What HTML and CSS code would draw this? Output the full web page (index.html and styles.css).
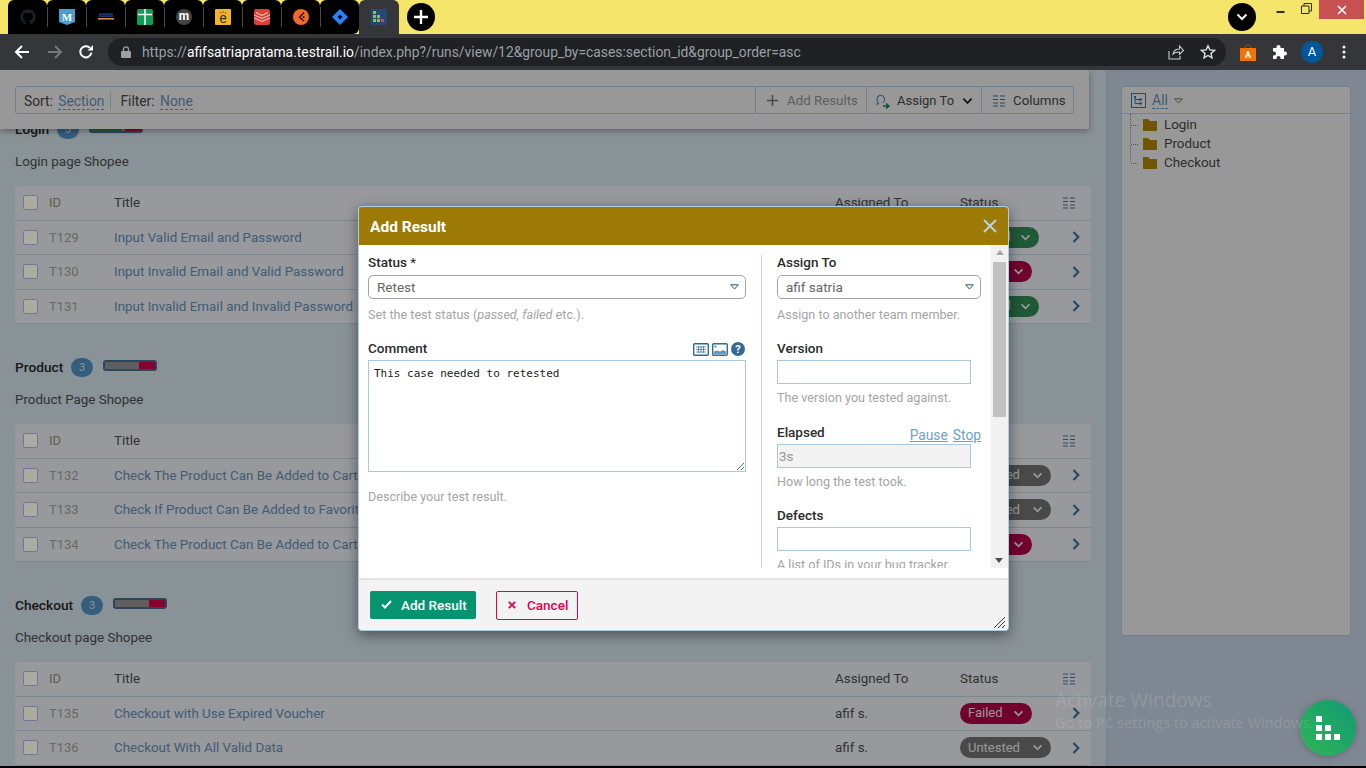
FILE: index.html
```html
<!DOCTYPE html>
<html lang="en">
<head>
<meta charset="utf-8">
<title>Test Run - TestRail</title>
<link rel="stylesheet" href="styles.css">
</head>
<body>
<svg class="defs" width="0" height="0" aria-hidden="true">
  <symbol id="chev-d" viewBox="0 0 12 8"><path d="M1.5 1.5 6 6l4.500-4.500" fill="none" stroke="currentColor" stroke-width="2"/></symbol>
  <symbol id="chev-r" viewBox="0 0 8 12"><path d="M1.5 1 6.300 6l-4.800 5" fill="none" stroke="currentColor" stroke-width="2.200"/></symbol>
  <symbol id="cols" viewBox="0 0 12 12"><path d="M0 1h5M7 1h5M0 4.500h5M7 4.500h5M0 8h5M7 8h5M0 11h5M7 11h5" stroke="currentColor" stroke-width="1.100"/></symbol>
  <symbol id="folder" viewBox="0 0 14 12"><path d="M0 0h5l2 2h7v10H0z" fill="#a67f00"/></symbol>
  <symbol id="caret" viewBox="0 0 11 7"><path d="M.8.8h9.400L5.500 6z" fill="none" stroke="currentColor" stroke-width="1.200"/></symbol>
</svg>

<header class="tabstrip">
  <div class="tabs">
    <div class="tab"><svg class="fav" viewBox="0 0 24 24"><path fill="#1b2227" d="M12 .5C5.650.5.500 5.650.500 12c0 5.080 3.290 9.390 7.860 10.910.570.100.780-.250.780-.550v-2.140c-3.200.700-3.870-1.360-3.870-1.360-.520-1.330-1.280-1.680-1.280-1.680-1.040-.710.080-.700.080-.700 1.150.080 1.760 1.180 1.760 1.180 1.030 1.760 2.690 1.250 3.340.960.100-.740.400-1.250.730-1.540-2.550-.290-5.240-1.280-5.240-5.690 0-1.260.450-2.290 1.180-3.090-.120-.290-.510-1.460.110-3.050 0 0 .960-.310 3.150 1.180a10.900 10.900 0 0 1 5.740 0c2.190-1.490 3.150-1.180 3.150-1.180.620 1.590.230 2.760.110 3.050.730.800 1.180 1.830 1.180 3.090 0 4.420-2.690 5.390-5.250 5.680.410.360.780 1.060.780 2.130v3.160c0 .310.210.660.790.550A11.500 11.500 0 0 0 23.500 12C23.500 5.650 18.350.5 12 .5z"/></svg></div>
    <div class="tab"><svg class="fav" viewBox="0 0 16 16"><path fill="#4a9fd0" d="M0 0h16v13l-8 3-8-3z"/><text x="8" y="11.500" class="fav-m">M</text></svg></div>
    <div class="tab"><svg class="fav" viewBox="0 0 16 16"><path fill="#27438f" d="M1 4.500h14v1.200H1zM1 6.500h14v1.200H1z"/><path fill="#d68a3c" d="M0 9h16v1.600H0z"/></svg></div>
    <div class="tab"><svg class="fav" viewBox="0 0 16 16"><rect width="16" height="16" rx="1.500" fill="#0f9d58"/><path d="M1 5.500h14M8 0v16" stroke="#fff" stroke-width="1.500"/></svg></div>
    <div class="tab"><svg class="fav" viewBox="0 0 16 16"><circle cx="8" cy="8" r="8" fill="#444"/><text x="8" y="11" class="fav-mm">m</text></svg></div>
    <div class="tab"><svg class="fav" viewBox="0 0 16 16"><rect width="16" height="16" rx="1" fill="#f2b71f"/><text x="8" y="14" class="fav-e">e</text><path d="M5 3l.800 1.400M8 2.200v1.600M11 3l-.800 1.400" stroke="#333" stroke-width=".9"/></svg></div>
    <div class="tab"><svg class="fav" viewBox="0 0 16 16"><rect width="16" height="16" rx="2.500" fill="#db4035"/><path d="M0 6l8 3.500L16 6M0 9l8 3.500L16 9M2 3.500l6 3 6-3" fill="none" stroke="#f6c9c4" stroke-width="1.100"/></svg></div>
    <div class="tab"><svg class="fav" viewBox="0 0 16 16"><circle cx="8" cy="8" r="8" fill="#f2682a"/><path d="M11 3.500 6.500 8.300 11 12" fill="none" stroke="#2a1208" stroke-width="1.300"/><circle cx="10.600" cy="8" r="1" fill="#2a1208"/></svg></div>
    <div class="tab"><svg class="fav" viewBox="0 0 16 16"><path fill="#2684ff" d="M8 0l8 8-8 8-8-8z"/><path fill="#000" d="M8 5.500 10.500 8 8 10.500 5.500 8z"/></svg></div>
    <div class="tab tab-active"><svg class="fav" viewBox="0 0 16 16"><rect width="16" height="16" fill="#25496f"/><path fill="#8bc34a" d="M2 2h3v3H2zM2 6h3v3H2zM6 6h3v3H6zM2 10h3v3H2zM6 10h3v3H6z"/><path fill="#d9455f" d="M10 10h3v3h-3z"/></svg></div>
  </div>
  <button class="round-btn new-tab" aria-label="New tab"><svg width="16" height="16" viewBox="0 0 16 16"><path d="M8 1v14M1 8h14" stroke="#fff" stroke-width="2.400"/></svg></button>
  <div class="strip-right">
    <button class="round-btn" aria-label="Search tabs"><svg width="12" height="8" class="white"><use href="#chev-d"/></svg></button>
    <div class="winctl">
      <span class="win-btn"><svg width="10" height="4" viewBox="0 0 10 4"><path d="M1.500 2h8" stroke="#2b2b1a" stroke-width="2"/></svg></span>
      <span class="win-btn win-restore"><svg width="11" height="11" viewBox="0 0 11 11"><path d="M.5 3h7.500v7.500H.5zM3 3V.5h7.500V8H8" fill="none" stroke="#2b2b1a"/></svg></span>
      <span class="win-close"><svg width="10" height="10" viewBox="0 0 10 10"><path d="M1 1l8 8M9 1l-8 8" stroke="#fff" stroke-width="1.600"/></svg></span>
    </div>
  </div>
</header>

<nav class="navbar">
  <svg class="nav-ico" viewBox="0 0 16 16" width="16" height="16"><path d="M15 8H2M8 2 2 8l6 6" fill="none" stroke="#fff" stroke-width="2"/></svg>
  <svg class="nav-ico" viewBox="0 0 16 16" width="16" height="16"><path d="M1 8h13M8 2l6 6-6 6" fill="none" stroke="#75777a" stroke-width="2"/></svg>
  <svg class="nav-ico" viewBox="0 0 16 16" width="16" height="16"><path d="M13.400 8.600A5.600 5.600 0 1 1 11.800 3.800" fill="none" stroke="#fff" stroke-width="2"/><path d="M9.500 6.500H15V1z" fill="#fff"/></svg>
  <div class="omnibox">
    <svg width="10" height="12" viewBox="0 0 10 12"><path d="M2.500 5V3.300a2.500 2.500 0 0 1 5 0V5" fill="none" stroke="#9aa0a6" stroke-width="1.300"/><rect y="5" width="10" height="7" rx="1" fill="#9aa0a6"/></svg>
    <span class="url">https://<b>afifsatriapratama.testrail.io</b>/index.php?/runs/view/12&amp;group_by=cases:section_id&amp;group_order=asc</span>
    <svg class="omni-share" width="16" height="16" viewBox="0 0 16 16"><path d="M1 7v8h11v-3M5 10c.600-3.400 3-5 6.500-5V2l4 4.500-4 4V8C9 8 6.500 8.400 5 10z" fill="none" stroke="#c9cccf" stroke-width="1.100"/></svg>
    <svg class="omni-star" width="16" height="16" viewBox="0 0 16 16"><path d="M8 1.800l1.900 4.100 4.500.5-3.400 3 1 4.400L8 11.500l-4 2.300 1-4.400-3.400-3 4.500-.5z" fill="none" stroke="#dfe1e5" stroke-width="1.400"/></svg>
  </div>
  <div class="nav-ext">
    <svg width="16" height="17" viewBox="0 0 16 17"><path d="M0 4h16v13H0z" fill="#f27405"/><path d="M5 4c0-4 6-4 6 0" fill="none" stroke="#a5500a"/><text x="8" y="14" class="fav-a">A</text></svg>
    <svg width="16" height="16" viewBox="0 0 16 16"><path fill="#fff" d="M1 4h3.500V3a2 2 0 0 1 4 0v1H12v3.500h1a2 2 0 0 1 0 4h-1V15H8.500v-1a2 2 0 0 0-4 0v1H1v-3.500h1a2 2 0 0 0 0-4H1z"/></svg>
    <span class="avatar">A</span>
    <svg width="4" height="14" viewBox="0 0 4 14"><circle cx="2" cy="2" r="1.500" fill="#fff"/><circle cx="2" cy="7" r="1.500" fill="#fff"/><circle cx="2" cy="12" r="1.500" fill="#fff"/></svg>
  </div>
</nav>

<div class="viewport">
  <main class="main">
    <div class="stickybar">
      <div class="bar">
        <div class="bar-sort">
          <span class="bar-item">Sort: <a class="dash">Section</a></span>
          <span class="bar-item bar-filter">Filter: <a class="dash">None</a></span>
        </div>
        <div class="bar-btn bar-add"><svg width="11" height="11" viewBox="0 0 11 11"><path d="M5.500 0v11M0 5.500h11" stroke="#6d6d6d" stroke-width="1.500"/></svg>Add Results</div>
        <div class="bar-btn bar-assign"><svg width="16" height="16" viewBox="0 0 16 16"><path d="M1 11h2.500c0-1-1.500-2.500-1.500-5a3.700 3.700 0 0 1 7.400 0c0 2-.7 3-1.200 4" fill="none" stroke="#3e6d93"/><path d="M8 13h5M11 10.500l3 2.500-3 2.500" fill="none" stroke="#0e7a50" stroke-width="1.500"/></svg>Assign To<svg class="chev-dark" width="11" height="8"><use href="#chev-d"/></svg></div>
        <div class="bar-btn bar-cols"><svg class="cols" width="12" height="12"><use href="#cols"/></svg>Columns</div>
      </div>
    </div>

    <section class="section">
      <h2 class="sec-head">Login <span class="count">3</span><span class="prog"><i class="seg seg-pass seg-w1"></i><i class="seg seg-grey seg-w2"></i><i class="seg seg-fail seg-w3"></i></span></h2>
      <p class="sec-desc">Login page Shopee</p>
      <div class="table">
        <div class="row row-head"><span class="chk"></span><span class="c-id">ID</span><span>Title</span><span>Assigned To</span><span>Status</span><svg class="cols" width="12" height="12"><use href="#cols"/></svg></div>
        <div class="row"><span class="chk"></span><span class="c-id">T129</span><a class="c-link">Input Valid Email and Password</a><span>afif s.</span><span class="badge b-pass">Passed<svg width="11" height="7"><use href="#chev-d"/></svg></span><svg class="go" width="8" height="12"><use href="#chev-r"/></svg></div>
        <div class="row"><span class="chk"></span><span class="c-id">T130</span><a class="c-link">Input Invalid Email and Valid Password</a><span>afif s.</span><span class="badge b-fail">Failed<svg width="11" height="7"><use href="#chev-d"/></svg></span><svg class="go" width="8" height="12"><use href="#chev-r"/></svg></div>
        <div class="row"><span class="chk"></span><span class="c-id">T131</span><a class="c-link">Input Invalid Email and Invalid Password</a><span>afif s.</span><span class="badge b-pass">Passed<svg width="11" height="7"><use href="#chev-d"/></svg></span><svg class="go" width="8" height="12"><use href="#chev-r"/></svg></div>
      </div>
    </section>

    <section class="section">
      <h2 class="sec-head">Product <span class="count">3</span><span class="prog"><i class="seg seg-grey seg-w4"></i><i class="seg seg-fail seg-w3"></i></span></h2>
      <p class="sec-desc">Product Page Shopee</p>
      <div class="table">
        <div class="row row-head"><span class="chk"></span><span class="c-id">ID</span><span>Title</span><span>Assigned To</span><span>Status</span><svg class="cols" width="12" height="12"><use href="#cols"/></svg></div>
        <div class="row"><span class="chk"></span><span class="c-id">T132</span><a class="c-link">Check The Product Can Be Added to Cart</a><span>afif s.</span><span class="badge b-un">Untested<svg width="11" height="7"><use href="#chev-d"/></svg></span><svg class="go" width="8" height="12"><use href="#chev-r"/></svg></div>
        <div class="row"><span class="chk"></span><span class="c-id">T133</span><a class="c-link">Check If Product Can Be Added to Favorite</a><span>afif s.</span><span class="badge b-un">Untested<svg width="11" height="7"><use href="#chev-d"/></svg></span><svg class="go" width="8" height="12"><use href="#chev-r"/></svg></div>
        <div class="row"><span class="chk"></span><span class="c-id">T134</span><a class="c-link">Check The Product Can Be Added to Cart</a><span>afif s.</span><span class="badge b-fail">Failed<svg width="11" height="7"><use href="#chev-d"/></svg></span><svg class="go" width="8" height="12"><use href="#chev-r"/></svg></div>
      </div>
    </section>

    <section class="section">
      <h2 class="sec-head">Checkout <span class="count">3</span><span class="prog"><i class="seg seg-grey seg-w4"></i><i class="seg seg-fail seg-w3"></i></span></h2>
      <p class="sec-desc">Checkout page Shopee</p>
      <div class="table">
        <div class="row row-head"><span class="chk"></span><span class="c-id">ID</span><span>Title</span><span>Assigned To</span><span>Status</span><svg class="cols" width="12" height="12"><use href="#cols"/></svg></div>
        <div class="row"><span class="chk"></span><span class="c-id">T135</span><a class="c-link">Checkout with Use Expired Voucher</a><span>afif s.</span><span class="badge b-fail">Failed<svg width="11" height="7"><use href="#chev-d"/></svg></span><svg class="go" width="8" height="12"><use href="#chev-r"/></svg></div>
        <div class="row"><span class="chk"></span><span class="c-id">T136</span><a class="c-link">Checkout With All Valid Data</a><span>afif s.</span><span class="badge b-un">Untested<svg width="11" height="7"><use href="#chev-d"/></svg></span><svg class="go" width="8" height="12"><use href="#chev-r"/></svg></div>
      </div>
    </section>
  </main>

  <aside class="side">
    <div class="tree">
      <div class="tree-head">
        <svg width="15" height="15" viewBox="0 0 15 15"><rect x=".5" y=".5" width="14" height="14" fill="none" stroke="#3e6d93"/><path d="M4 3.500v7h4M4 6.500h4" fill="none" stroke="#3e6d93"/><path d="M3 3h2v2H3zM8 5.500h3v2H8zM8 9.500h3v2H8z" fill="#3e6d93"/></svg>
        <a class="dash dash-all">All</a>
        <svg class="tree-caret" width="9" height="6"><use href="#caret"/></svg>
      </div>
      <ul class="tree-list">
        <li><svg width="14" height="12"><use href="#folder"/></svg>Login</li>
        <li><svg width="14" height="12"><use href="#folder"/></svg>Product</li>
        <li><svg width="14" height="12"><use href="#folder"/></svg>Checkout</li>
      </ul>
    </div>
  </aside>

  <div class="backdrop"></div>

  <div class="fab"><svg width="25" height="24" viewBox="0 0 25 24"><path fill="#fff" d="M0 0h6v6H0zM0 9h6v6H0zM9 9h6v6H9zM0 18h6v6H0zM9 18h6v6H9zM18 18h6v6h-6z"/></svg></div>

  <div class="wm">
    <div class="wm-1">Activate Windows</div>
    <div class="wm-2">Go to PC settings to activate Windows.</div>
  </div>

  <div class="modal">
    <div class="modal-head"><span class="modal-title">Add Result</span><svg width="14" height="14" viewBox="0 0 14 14"><path d="M1 1l12 12M13 1 1 13" stroke="#b9d3e4" stroke-width="2"/></svg></div>
    <div class="modal-body">
      <div class="m-left">
        <label class="lbl">Status <span class="star">*</span></label>
        <div class="select"><span>Retest</span><svg width="9" height="6"><use href="#caret"/></svg></div>
        <p class="help">Set the test status (<em>passed, failed</em> etc.).</p>
        <div class="lbl-row lbl-comment"><label class="lbl">Comment</label>
          <span class="lbl-icons">
            <svg width="16" height="13" viewBox="0 0 16 13"><rect x=".7" y=".7" width="14.600" height="11.600" rx="1" fill="#fff" stroke="#336a94" stroke-width="1.400"/><path d="M3 4h10M3 6.500h10M3 9h10M5.500 3v7M8 3v7M10.500 3v7" stroke="#336a94" stroke-width=".7"/></svg>
            <svg width="16" height="13" viewBox="0 0 16 13"><rect x=".7" y=".7" width="14.600" height="11.600" rx="1" fill="#fff" stroke="#336a94" stroke-width="1.400"/><path d="M2 11V8.500l3-1 3 1 3-1.500 3 1.500V11z" fill="#5a9ac8"/><path d="M2.500 2.500h2v2h-2z" fill="#3cae5c"/></svg>
            <svg width="14" height="14" viewBox="0 0 14 14"><circle cx="7" cy="7" r="7" fill="#336a94"/><text x="7" y="11" class="q">?</text></svg>
          </span>
        </div>
        <div class="ta-wrap">
          <textarea class="ta" spellcheck="false">This case needed to retested</textarea>
        </div>
        <p class="help help-desc">Describe your test result.</p>
      </div>
      <div class="m-right">
        <div class="m-right-in">
          <label class="lbl">Assign To</label>
          <div class="select"><span>afif satria</span><svg width="9" height="6"><use href="#caret"/></svg></div>
          <p class="help">Assign to another team member.</p>
          <label class="lbl lbl-gap">Version</label>
          <div class="input"></div>
          <p class="help help-t">The version you tested against.</p>
          <div class="lbl-row lbl-elapsed"><label class="lbl">Elapsed</label><span class="timer"><a>Pause</a><a>Stop</a></span></div>
          <div class="input input-off">3s</div>
          <p class="help help-t">How long the test took.</p>
          <label class="lbl lbl-defects">Defects</label>
          <div class="input"></div>
          <p class="help help-t">A list of IDs in your bug tracker.</p>
        </div>
      </div>
      <div class="scroll">
        <span class="sc-up"></span>
        <span class="sc-thumb"></span>
        <span class="sc-down"></span>
      </div>
    </div>
    <div class="modal-gap"></div>
    <div class="modal-foot">
      <button class="btn btn-ok"><svg width="11" height="9" viewBox="0 0 11 9"><path d="M1 4.500 4 7.500 10 1" fill="none" stroke="#fff" stroke-width="2"/></svg>Add Result</button>
      <button class="btn btn-no"><svg width="8" height="8" viewBox="0 0 8 8"><path d="M.8.8l6.400 6.400M7.200.8.800 7.200" stroke="#e2004f" stroke-width="1.800"/></svg>Cancel</button>
      <svg class="grip" width="11" height="11" viewBox="0 0 11 11"><path d="M0 11 11 0M4 11l7-7M8 11l3-3" stroke="#333"/></svg>
    </div>
  </div>
</div>
</body>
</html>
```

FILE: styles.css
```css
* { box-sizing: border-box; }
html, body { margin: 0; height: 768px; overflow: hidden; }
body { background: #000; font: 13.4px/20px Roboto, "Liberation Sans", sans-serif; color: #333; }
.defs { position: absolute; }
a { color: inherit; }
p { margin: 0; }
h2 { margin: 0; }
ul { margin: 0; padding: 0; list-style: none; }
button { font: inherit; border: 0; padding: 0; cursor: pointer; }

/* browser chrome */
.tabstrip { height: 34px; background: #f5e56b; display: flex; align-items: stretch; padding-left: 8px; }
.tabs { display: flex; }
.tab { width: 39px; height: 34px; background: #000; border-radius: 6px 6px 0 0; display: flex; align-items: center; justify-content: center; position: relative; }
.tab + .tab::before { content: ""; position: absolute; left: 0; top: 7px; bottom: 7px; width: 1px; background: #4a4a4a; }
.tab:nth-child(9) { border-bottom-right-radius: 6px; }
.tab-active { width: 40px; background: #35363a; }
.tab-active::before { display: none; }
.fav { width: 16px; height: 16px; }
.fav-m { font: 700 11px "Liberation Serif", serif; fill: #fff; text-anchor: middle; }
.fav-mm { font: 700 12px Roboto, sans-serif; fill: #fff; text-anchor: middle; }
.fav-e { font: 400 14px Roboto, sans-serif; fill: #333; text-anchor: middle; }
.fav-a { font: 700 9px Roboto, sans-serif; fill: #fff; text-anchor: middle; }
.round-btn { width: 28px; height: 28px; border-radius: 50%; background: #000; display: flex; align-items: center; justify-content: center; margin-top: 3px; }
.new-tab { margin-left: 8px; }
.white { color: #fff; }
.strip-right { margin-left: auto; display: flex; }
.winctl { display: flex; align-items: flex-start; margin-left: 11px; padding-right: 2px; }
.win-btn { width: 26px; height: 19px; display: flex; align-items: center; justify-content: center; }
.win-btn:first-child { margin-top: 2px; }
.win-restore { margin-top: -1px; }
.win-close { width: 45px; height: 19px; background: #c75050; display: flex; align-items: center; justify-content: center; }

.navbar { height: 36px; background: #35363a; display: flex; align-items: center; padding-left: 14px; position: relative; }
.nav-ico { margin-right: 17px; flex: none; }
.navbar .nav-ico:nth-child(2) { margin-right: 15px; }
.navbar .nav-ico:nth-child(3) { margin-right: 14px; }
.omnibox { width: 1118px; height: 28px; border-radius: 14px; background: #202124; display: flex; align-items: center; padding-left: 13px; flex: none; }
.url { margin-left: 11px; font: 13.85px/20px Roboto, sans-serif; color: #9aa0a6; white-space: nowrap; }
.url b { font-weight: 400; color: #fff; }
.omni-share { margin-left: auto; }
.omni-star { margin: 0 10px 0 16px; }
.nav-ext { display: flex; align-items: center; margin-left: 14px; }
.nav-ext > svg:nth-child(2) { margin-left: 16px; }
.avatar { width: 22px; height: 22px; border-radius: 50%; background: #01579b; color: #fff; font-size: 13px; line-height: 22px; text-align: center; margin-left: 13px; }
.nav-ext > svg:nth-child(4) { margin-left: 19px; }

/* page */
.viewport { position: relative; height: 696px; display: flex; overflow: hidden; background: #cbd7dd; }
.main { width: 1107px; flex: none; border-right: 1px solid #a6bfd3; padding: 48px 15px 0; position: relative; overflow: hidden; }
.side { flex: 1; background: #bcc9d7; padding: 16px 15px 0 14px; }

.stickybar { position: absolute; z-index: 2; left: 0; top: 0; width: 1089px; height: 59px; background: #e1e1e1; padding: 16px 15px 0; box-shadow: 0 2px 6px rgba(0,0,0,.35); }
.bar { height: 28px; border: 1px solid #a6bfd3; border-radius: 2px; display: flex; align-items: center; color: #444; font-size: 13px; }
.bar-sort { flex: 1; display: flex; align-items: center; padding: 1px 0 0 8px; font-size: 13.8px; }
.bar-item { display: block; white-space: nowrap; }
.bar-filter { border-left: 1px solid #a6bfd3; margin-left: 6px; padding-left: 9px; height: 18px; line-height: 18px; }
.dash { color: #6188ab; border-bottom: 1px dashed #5a8ab8; margin-left: 2px; }
.bar-btn { height: 100%; border-left: 1px solid #a6bfd3; display: flex; align-items: center; gap: 9px; padding: 1px 0 0 11px; white-space: nowrap; }
.bar-add { width: 111px; color: #8a8a8a; font-size: 13.3px; }
.bar-assign { width: 115px; gap: 6px; padding-left: 8px; }
.bar-cols { width: 92px; gap: 8px; font-size: 13.3px; }
.chev-dark { color: #222; margin-left: 2px; }
.cols { color: #3e6d93; }

.section { height: 238px; }
.sec-head { height: 22px; display: flex; align-items: center; font: 500 13.7px/22px Roboto, sans-serif; color: #262626; }
.count { width: 22px; height: 19px; border-radius: 10px; background: #4f8bb8; color: #c7d8e4; font: 400 11px/19px Roboto, sans-serif; text-align: center; margin-left: 8px; }
.prog { width: 54px; height: 11px; border: 2px solid #42678a; border-radius: 3px; background: #42678a; margin: -3px 0 0 10px; display: flex; }
.seg { display: block; height: 100%; }
.seg-pass { background: #2f8450; }
.seg-grey { background: #8c8c8c; }
.seg-fail { background: #c70045; }
.seg-w1 { width: 30px; }
.seg-w2 { width: 4px; }
.seg-w3 { width: 16px; }
.seg-w4 { width: 34px; }
.sec-desc { margin-top: 11px; padding-top: 1px; color: #4a4a4a; height: 20px; }
.table { margin-top: 15px; background: #dfe2e8; border-radius: 3px; overflow: hidden; }
.row { height: 34.5px; display: grid; grid-template-columns: 26px 65px 721px 125px 103px 28px; padding-left: 8px; align-items: center; border-bottom: 1px solid #b5c7d6; color: #4a4a4a; white-space: nowrap; }
.row > span:not(.chk):not(.badge), .row > a { padding-top: 1px; }
.row-head > span:not(.chk) { padding-top: 2px; }
.row .cols { justify-self: start; }
.row .go { justify-self: center; margin-right: 2px; }
.go { color: #3e6d93; }
.chk { width: 15px; height: 15px; border: 1px solid #a7b2dc; border-radius: 2px; background: #fdfcee; }
.c-id { color: #a09a90; font-size: 13px; }
.row-head .c-id { color: #99856a; }
.c-link { color: #6188ab; }
.badge { display: inline-flex; align-items: center; justify-content: space-between; height: 21px; border-radius: 11px; padding: 0 8px; color: #e0e0e0; font-size: 13px; }
.b-pass { background: #2f8450; width: 79px; }
.b-fail { background: #a80044; width: 72px; }
.b-un { background: #6c6c6c; width: 91px; }

.tree { height: 550px; background: #e1e1e1; border: 1px solid #a6bfd3; border-radius: 3px; }
.tree-head { height: 27px; display: flex; align-items: center; border-bottom: 1px solid #a6bfd3; padding: 1px 0 0 9px; color: #4a4a4a; }
.dash-all { margin-left: 6px; line-height: 15px; font-size: 14px; }
.tree-caret { color: #6a6a6a; margin-left: 6px; }
.tree-list { padding: 1px 0 0 21px; color: #444; position: relative; }
.tree-list::before { content: ""; position: absolute; left: 8px; top: 0; height: 48px; border-left: 1px dotted #6f8ba3; }
.tree-list li { height: 19px; display: flex; align-items: center; gap: 7px; position: relative; }
.tree-list li::before { content: ""; position: absolute; left: -12px; top: 10px; width: 7px; border-top: 1px dotted #6f8ba3; }

.backdrop { position: absolute; inset: 0; background: rgba(0,0,0,.32); z-index: 3; }

.wm { position: absolute; z-index: 5; left: 1055px; top: 618px; color: rgba(255,255,255,.14); white-space: nowrap; font-family: "Open Sans", sans-serif; }
.wm-1 { font-size: 19.1px; line-height: 24px; }
.wm-2 { font-size: 14.5px; line-height: 21px; }

.fab { position: absolute; z-index: 4; left: 1300px; top: 630px; width: 56px; height: 56px; border-radius: 50%; background: linear-gradient(225deg, #0e9a72, #34b558); display: flex; align-items: center; justify-content: center; box-shadow: 0 1px 6px rgba(0,0,0,.25); }

/* dialog */
.modal { position: absolute; z-index: 6; left: 358px; top: 136px; width: 651px; height: 425px; background: #fff; border: 1px solid #a9cfe6; border-radius: 4px; display: flex; flex-direction: column; box-shadow: 0 4px 14px rgba(0,0,0,.45); overflow: hidden; }
.modal-head { height: 38px; flex: none; background: #9d7906; color: #fff; display: flex; align-items: center; justify-content: space-between; padding: 0 11px; }
.modal-title { font: 700 15.500px/20px Roboto, sans-serif; padding-top: 2px; }
.modal-body { height: 323px; flex: none; display: flex; overflow: hidden; }
.m-left { width: 402px; flex: none; padding: 7px 0 0 9px; }
.lbl { display: block; font: 500 13.500px/20px Roboto, sans-serif; color: #2c2c2c; }
.star { font-weight: 400; }
.select { height: 24px; margin-top: 3px; border: 1px solid #a3a3a3; border-radius: 5px; display: flex; align-items: center; justify-content: space-between; padding: 0 6px 0 8px; color: #666; font-size: 13.500px; }
.select svg { color: #28506e; }
.m-left .select { width: 378px; }
.help { margin-top: 6px; color: #a5a5a5; font-size: 12.600px; height: 20px; white-space: nowrap; }
.help em { font-style: italic; }
.lbl-row { display: flex; justify-content: space-between; }
.lbl-comment { margin-top: 13px; height: 22px; width: 378px; padding-right: 1px; }
.lbl-icons { display: flex; align-items: flex-end; gap: 3px; height: 18px; }
.ta-wrap { width: 378px; height: 112px; }
.ta { display: block; width: 100%; height: 100%; border: 1px solid #a9c8dc; border-radius: 0; padding: 5px; margin: 0; font: 11px/15px "DejaVu Sans Mono", monospace; color: #222; outline: 0; }
.help-desc { margin-top: 15px; }
.m-right { width: 230px; flex: none; margin-top: 10px; padding: 0 0 0 15px; border-left: 1px solid #c5d8e6; overflow: hidden; }
.m-right-in { margin-top: -3px; width: 204px; }
.m-right .input { width: 194px; }
.lbl-gap { margin-top: 13px; height: 22px; }
.input { height: 24px; border: 1px solid #a9c8dc; }
.input-off { background: #f3f3f3; color: #999; padding-left: 1px; line-height: 22px; font-size: 13.500px; }
.help-t { margin-top: 4px; }
.lbl-elapsed { height: 22px; margin-top: 14px; }
.timer { display: flex; gap: 5px; color: #6ba1cb; padding-top: 3px; font-size: 13.8px; }
.timer a { text-decoration: underline; }
.lbl-defects { margin-top: 13px; height: 22px; }
.scroll { width: 17px; flex: none; background: #f1f1f1; display: flex; flex-direction: column; align-items: center; position: relative; }
.sc-up { width: 0; height: 0; border: 4px solid transparent; border-top: 0; border-bottom: 5px solid #a3a3a3; margin-top: 5px; }
.sc-thumb { width: 13px; height: 155px; background: #c1c1c1; margin-top: 7px; }
.sc-down { position: absolute; bottom: 5px; left: 4px; width: 0; height: 0; border: 4px solid transparent; border-bottom: 0; border-top: 5px solid #505050; }
.modal-gap { height: 10px; flex: none; }
.modal-foot { flex: 1; background: #f3f3f3; border-top: 2px solid #e2e2e2; display: flex; align-items: flex-start; padding: 11px 0 0 11px; position: relative; }
.btn { display: flex; align-items: center; height: 28px; border-radius: 2px; font: 500 13.500px/20px Roboto, sans-serif; white-space: nowrap; padding-bottom: 1px; }
.btn-ok { width: 106px; background: #059370; color: #fff; padding-left: 11px; gap: 9px; }
.btn-no { width: 82px; height: 29px; margin-left: 20px; background: transparent; border: 1px solid #e2004f; color: #e2004f; padding-left: 11px; gap: 11px; padding-bottom: 2px; }
.grip { position: absolute; right: 3px; bottom: 2px; }
.q { font: 700 11px Roboto, sans-serif; fill: #fff; text-anchor: middle; }
```
